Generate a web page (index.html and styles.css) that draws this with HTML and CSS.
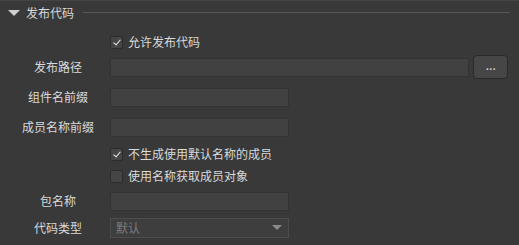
FILE: index.html
```html
<!DOCTYPE html>
<html lang="zh-CN">
<head>
    <meta charset="UTF-8">
    <title>发布代码</title>
    <link rel="stylesheet" href="styles.css">
</head>
<body>
    <div class="panel">
        <div class="section-head">
            <span class="caret"></span>
            <span class="section-title">发布代码</span>
            <span class="section-rule"></span>
        </div>

        <div class="row check-row first">
            <span class="label"></span>
            <label class="check"><span class="box on"></span>允许发布代码</label>
        </div>

        <div class="row field-row path-row">
            <span class="label">发布路径</span>
            <div class="input wide"></div>
            <button class="browse">...</button>
        </div>

        <div class="row field-row">
            <span class="label">组件名前缀</span>
            <div class="input"></div>
        </div>

        <div class="row field-row">
            <span class="label">成员名称前缀</span>
            <div class="input"></div>
        </div>

        <div class="row check-row after-fields">
            <span class="label"></span>
            <label class="check"><span class="box on"></span>不生成使用默认名称的成员</label>
        </div>

        <div class="row check-row">
            <span class="label"></span>
            <label class="check"><span class="box"></span>使用名称获取成员对象</label>
        </div>

        <div class="row field-row pkg-row">
            <span class="label">包名称</span>
            <div class="input"></div>
        </div>

        <div class="row field-row type-row">
            <span class="label">代码类型</span>
            <div class="select">默认<span class="select-arrow"></span></div>
        </div>
    </div>
</body>
</html>
```

FILE: styles.css
```css
html, body {
    margin: 0;
    background: #393939;
}
body {
    font-family: "Noto Sans CJK SC", "Noto Sans", sans-serif;
    font-size: 12px;
    color: #dadada;
}
.panel {
    width: 519px;
    height: 245px;
    border-top: 1px solid #444;
    box-sizing: border-box;
    overflow: hidden;
}
.section-head {
    display: flex;
    align-items: center;
    height: 23px;
    padding-left: 8px;
    padding-right: 9px;
}
.caret {
    width: 0;
    height: 0;
    border-left: 6px solid transparent;
    border-right: 6px solid transparent;
    border-top: 6px solid #cfcfcf;
    margin-right: 6px;
}
.section-title {
    line-height: 14px;
    color: #dadada;
}
.section-rule {
    flex: 1;
    height: 1px;
    background: #575757;
    margin-left: 9px;
}
.row {
    display: flex;
    align-items: center;
    padding-left: 8px;
}
.label {
    width: 100px;
    flex: none;
    text-align: center;
    margin-right: 2px;
    line-height: 14px;
}
.check-row {
    height: 22px;
}
.check-row.first {
    margin-top: 7px;
}
.check-row.after-fields {
    margin-top: 4px;
}
.check {
    display: flex;
    align-items: center;
    line-height: 14px;
}
.box {
    width: 11px;
    height: 11px;
    border: 1px solid #2c2c2c;
    background: #454545;
    border-radius: 2px;
    margin-right: 5px;
    position: relative;
}
.box.on::after {
    content: "";
    position: absolute;
    left: 4px;
    top: 1px;
    width: 3px;
    height: 6px;
    border-right: 1.5px solid #e8e8e8;
    border-bottom: 1.5px solid #e8e8e8;
    transform: rotate(40deg);
}
.field-row {
    height: 24px;
    margin-top: 6px;
}
.path-row {
    margin-top: 2px;
}
.pkg-row {
    margin-top: 2px;
}
.type-row {
    margin-top: 3px;
}
.input {
    width: 177px;
    height: 17px;
    background: #414141;
    border: 1px solid #333;
}
.input.wide {
    width: 357px;
}
.browse {
    width: 35px;
    height: 24px;
    margin-left: 4px;
    background: #464646;
    border: 1px solid #2a2a2a;
    border-radius: 4px;
    color: #dcdcdc;
    font-family: "Liberation Sans", sans-serif;
    font-size: 10px;
    font-weight: bold;
    line-height: 14px;
    padding: 0 0 0 1px;
    letter-spacing: 0.5px;
}
.select {
    width: 172px;
    height: 18px;
    line-height: 18px;
    padding-left: 5px;
    background: #3e3e3e;
    border: 1px solid #4c4c4c;
    color: #7c7c7c;
    position: relative;
}
.select-arrow {
    position: absolute;
    right: 6px;
    top: 6px;
    width: 0;
    height: 0;
    border-left: 5px solid transparent;
    border-right: 5px solid transparent;
    border-top: 5px solid #8a8a8a;
}
```
